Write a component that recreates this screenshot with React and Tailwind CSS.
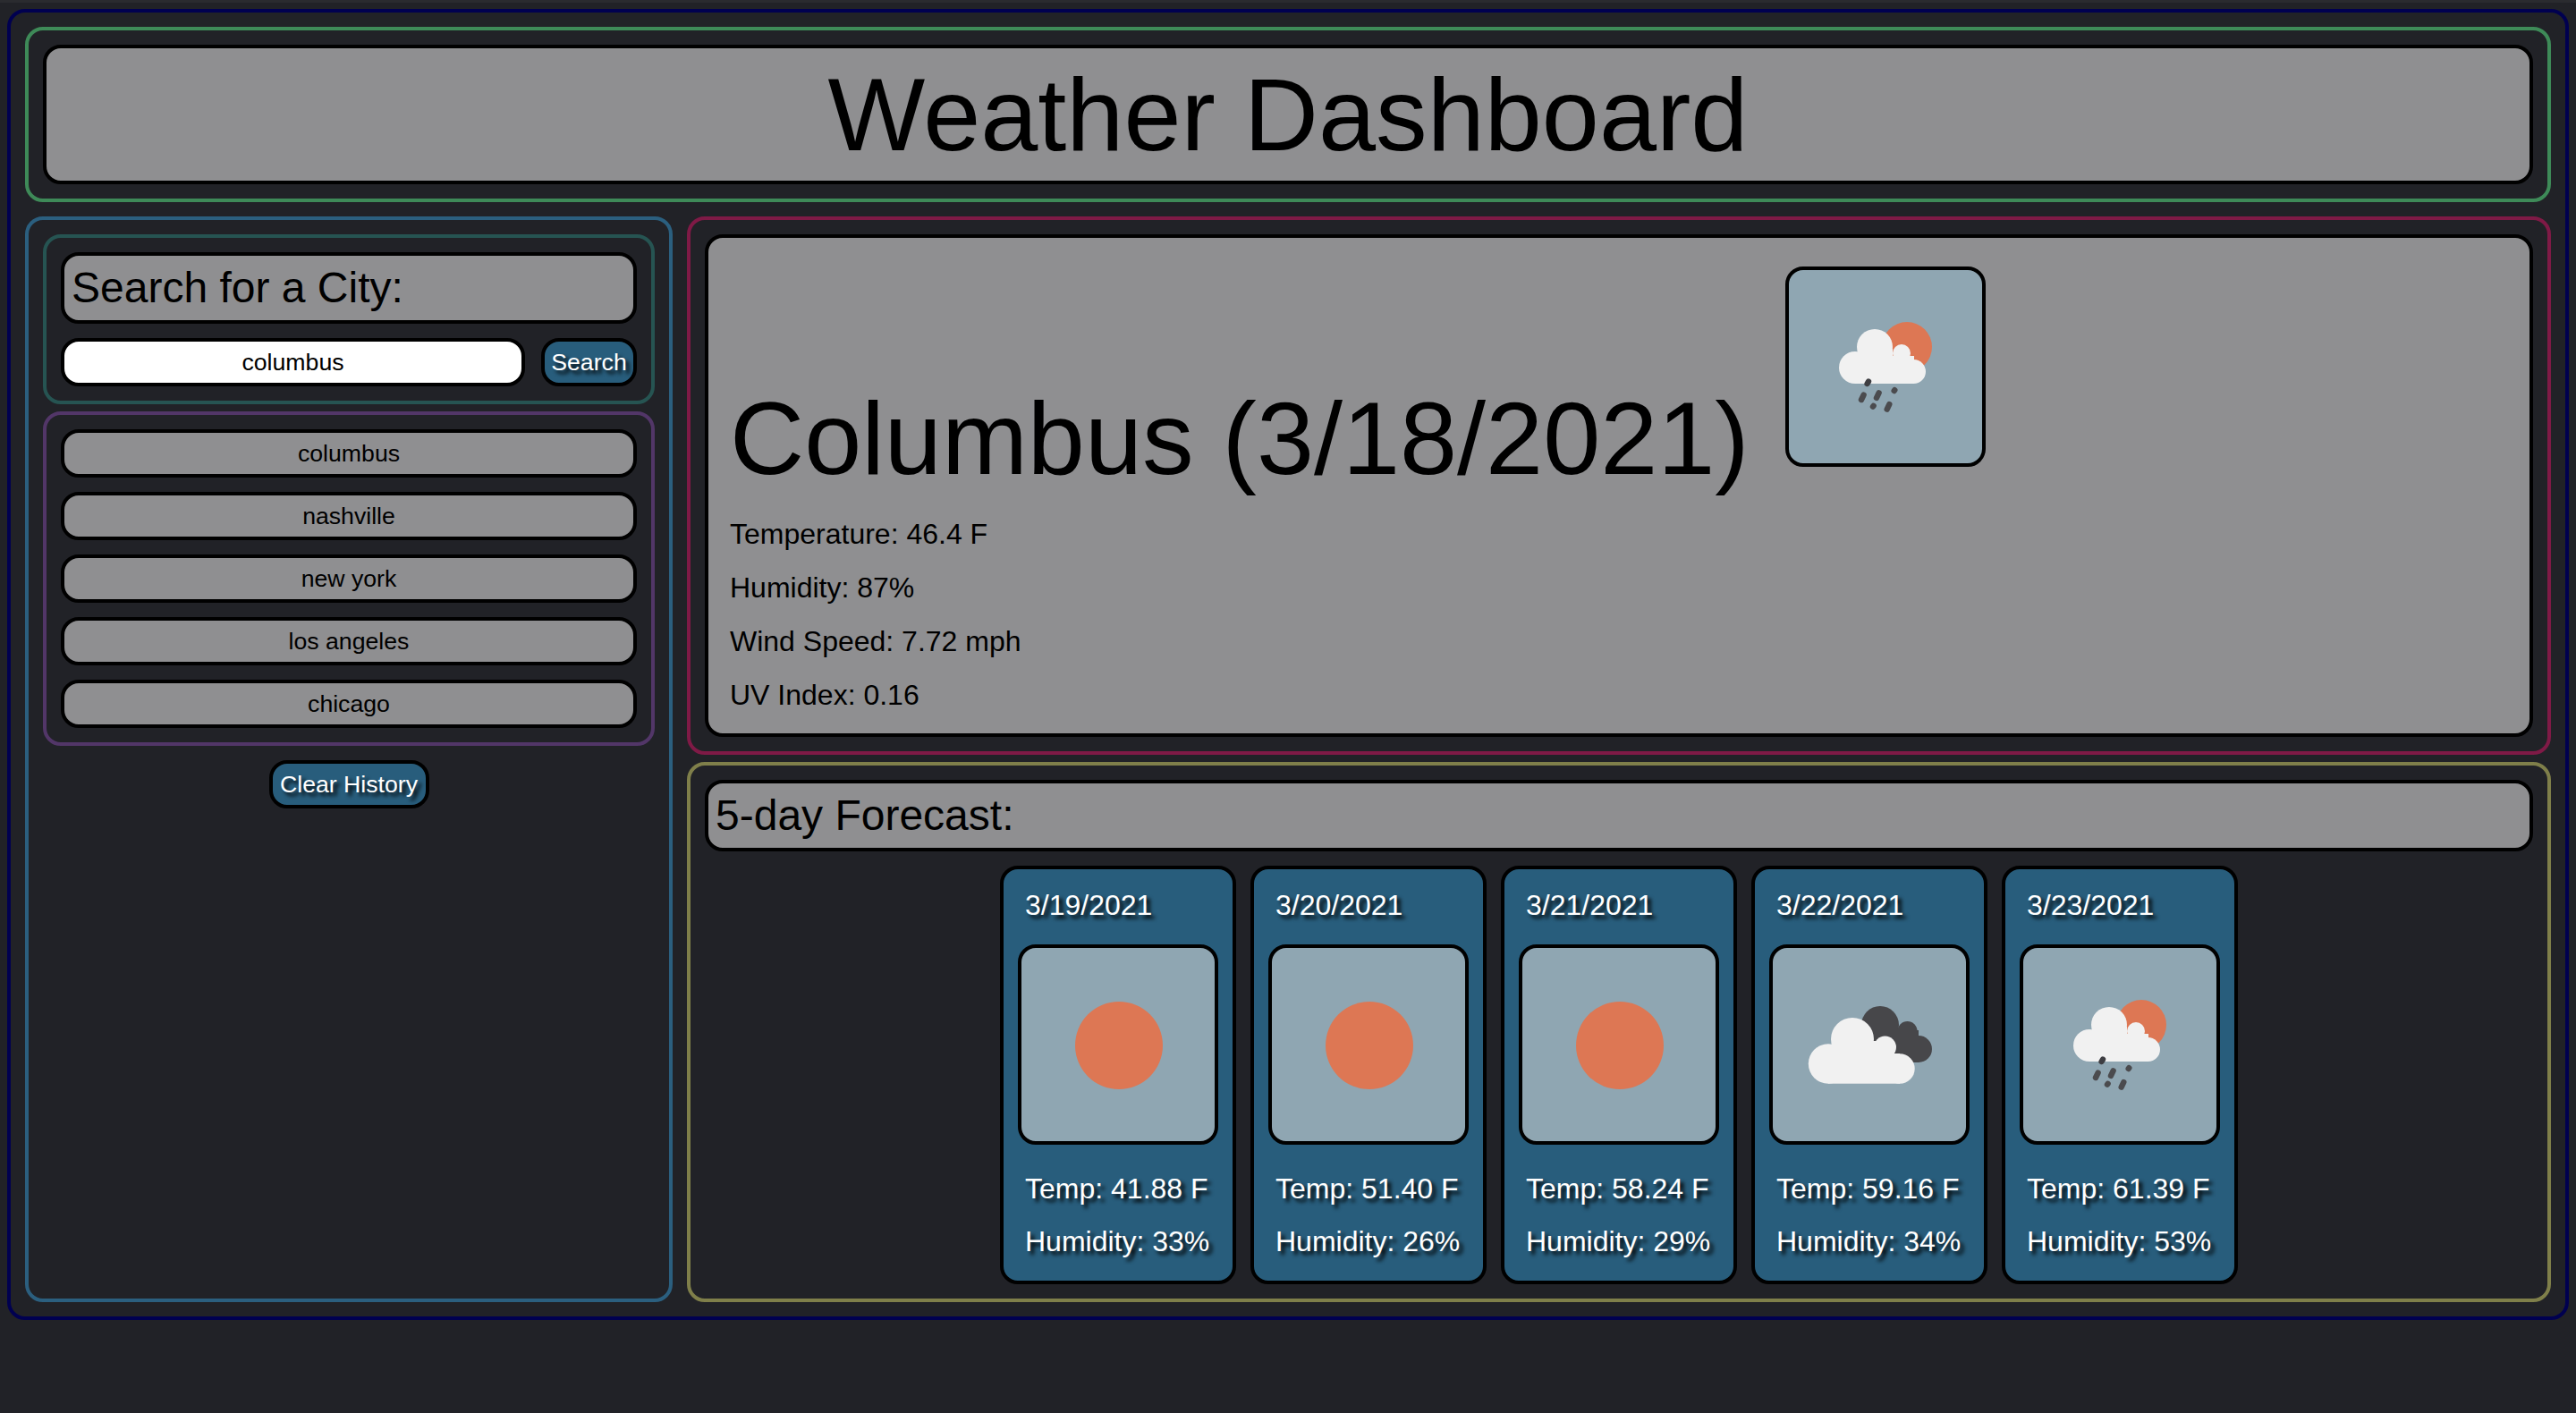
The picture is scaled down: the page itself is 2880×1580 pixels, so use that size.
const SANS = "font-['Liberation_Sans',Arial,Helvetica,sans-serif]";

function Rain() {
  return (
    <g stroke="#4b4b4e" strokeWidth="6.4" strokeLinecap="round">
      <line x1="87.6" y1="127" x2="89" y2="124.6" stroke="#3e3e42" />
      <line x1="81" y1="145" x2="83.6" y2="139.6" />
      <line x1="98" y1="142.8" x2="100.6" y2="137.4" />
      <line x1="117.7" y1="135" x2="118.3" y2="134.2" />
      <line x1="94" y1="152.6" x2="94.6" y2="151.8" />
      <line x1="109.7" y1="155.6" x2="112.3" y2="150.2" />
    </g>
  );
}

function RainIcon() {
  return (
    <svg viewBox="0 0 216 216" className="w-full h-full">
      <circle cx="132" cy="86" r="28" fill="#dd7754" />
      <g fill="#f1f1f1">
        <circle cx="96" cy="86" r="20" />
        <circle cx="74" cy="109" r="18" />
        <circle cx="126" cy="93" r="10" />
        <circle cx="139.5" cy="113.5" r="13.5" />
        <rect x="74" y="96" width="66" height="31" />
        <rect x="80" y="88" width="36" height="16" />
      </g>
      <Rain />
    </svg>
  );
}

function SunIcon() {
  return (
    <svg viewBox="0 0 216 216" className="w-full h-full">
      <circle cx="109" cy="109" r="49" fill="#dd7754" />
    </svg>
  );
}

function CloudsIcon() {
  return (
    <svg viewBox="0 0 216 216" className="w-full h-full">
      <g fill="#47474a">
        <circle cx="120" cy="86" r="21" />
        <circle cx="150.5" cy="93" r="11" />
        <circle cx="163" cy="113" r="15" />
        <rect x="118" y="92" width="45" height="36" />
      </g>
      <g fill="#f1f1f1">
        <circle cx="89" cy="102" r="24" />
        <circle cx="62" cy="129.5" r="22.2" />
        <circle cx="125.5" cy="111" r="12.5" />
        <circle cx="142" cy="135" r="16.7" />
        <rect x="62" y="118" width="80" height="33.7" />
        <rect x="70" y="104" width="55" height="21" />
      </g>
    </svg>
  );
}

function IconBox({ children, className = "" }) {
  return (
    <div className={`w-[224px] h-[224px] shrink-0 border-4 border-black rounded-[20px] bg-[#8fa6b2] overflow-hidden ${className}`}>
      {children}
    </div>
  );
}

const history = ["columbus", "nashville", "new york", "los angeles", "chicago"];

const forecast = [
  { date: "3/19/2021", temp: "41.88", hum: "33", icon: <SunIcon /> },
  { date: "3/20/2021", temp: "51.40", hum: "26", icon: <SunIcon /> },
  { date: "3/21/2021", temp: "58.24", hum: "29", icon: <SunIcon /> },
  { date: "3/22/2021", temp: "59.16", hum: "34", icon: <CloudsIcon /> },
  { date: "3/23/2021", temp: "61.39", hum: "53", icon: <RainIcon /> },
];

const shadow = "[text-shadow:4px_4px_4px_#000]";

function Card({ date, temp, hum, icon }) {
  return (
    <div className={`w-[264px] border-4 border-black rounded-[20px] bg-[#285d7c] text-white px-4 pt-4 pb-5 text-[32px] leading-[48px] ${shadow}`}>
      <p className="pl-2">{date}</p>
      <IconBox className="mt-5">{icon}</IconBox>
      <p className="pl-2 mt-[25px] whitespace-nowrap">Temp: {temp} F</p>
      <p className="pl-2 mt-[11px] whitespace-nowrap">Humidity: {hum}%</p>
    </div>
  );
}

export default function App() {
  return (
    <div className={`min-h-screen w-full bg-[#212227] text-black ${SANS}`}>
      <div className="h-[3px] bg-[#2a2b2f]" />
      <div className="mx-2 mt-[7px] border-4 border-[#000050] rounded-[20px] p-4 flex flex-col gap-4">
        <header className="border-4 border-[#3e8a58] rounded-[20px] p-4">
          <h1 className="border-4 border-black rounded-[20px] bg-[#8f8f91] h-[156px] text-center text-[115.2px] leading-[148px]">
            Weather Dashboard
          </h1>
        </header>

        <div className="flex gap-4">
          <aside className="w-[724px] shrink-0 border-4 border-[#2b5f7f] rounded-[20px] p-4 flex flex-col">
            <section className="border-4 border-[#265452] rounded-[20px] p-4 flex flex-col gap-4">
              <h2 className="border-4 border-black rounded-[20px] bg-[#8f8f91] h-[80px] pl-2 text-[48px] leading-[72px]">
                Search for a City:
              </h2>
              <div className="flex justify-between">
                <input
                  readOnly
                  value="columbus"
                  className="w-[519px] h-[54px] border-4 border-black rounded-[20px] bg-white text-center text-[26.67px] outline-none"
                />
                <button className={`w-[107px] h-[54px] border-4 border-black rounded-[20px] bg-[#285d7c] text-white text-[26.67px] ${shadow}`}>
                  Search
                </button>
              </div>
            </section>

            <section className="mt-2 border-4 border-[#523668] rounded-[20px] p-4 flex flex-col gap-4">
              {history.map((c) => (
                <button key={c} className="h-[54px] border-4 border-black rounded-[20px] bg-[#8f8f91] text-[26.67px]">
                  {c}
                </button>
              ))}
            </section>

            <button className={`mt-4 self-center w-[179px] h-[54px] border-4 border-black rounded-[20px] bg-[#285d7c] text-white text-[26.67px] ${shadow}`}>
              Clear History
            </button>
          </aside>

          <main className="flex-1 flex flex-col gap-2">
            <section className="border-4 border-[#7f1a46] rounded-[20px] p-4">
              <div className="border-4 border-black rounded-[20px] bg-[#8f8f91] pl-6 pb-[7px]">
                <div className="flex items-start pt-8">
                  <h2 className="mt-[123px] mb-[14px] text-[115.2px] leading-[138px] whitespace-nowrap">
                    Columbus (3/18/2021)
                  </h2>
                  <IconBox className="ml-[40px]">
                    <RainIcon />
                  </IconBox>
                </div>
                <div className="text-[32px] leading-[48px] flex flex-col gap-3 pb-3">
                  <p>Temperature: 46.4 F</p>
                  <p>Humidity: 87%</p>
                  <p>Wind Speed: 7.72 mph</p>
                  <p>UV Index: 0.16</p>
                </div>
              </div>
            </section>

            <section className="flex-1 border-4 border-[#7f7f4a] rounded-[20px] p-4 flex flex-col gap-4">
              <h2 className="border-4 border-black rounded-[20px] bg-[#8f8f91] h-[80px] pl-2 text-[48px] leading-[72px]">
                5-day Forecast:
              </h2>
              <div className="flex justify-center gap-4">
                {forecast.map((f) => (
                  <Card key={f.date} {...f} />
                ))}
              </div>
            </section>
          </main>
        </div>
      </div>
    </div>
  );
}
